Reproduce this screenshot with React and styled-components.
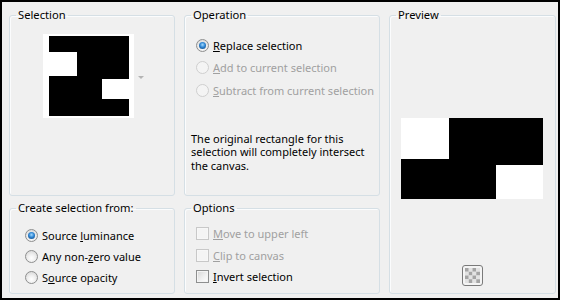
import React from "react";
import styled, { createGlobalStyle } from "styled-components";

const Global = createGlobalStyle`
  html, body {
    margin: 0;
    padding: 0;
    background: #ffffff;
  }
  body {
    font-family: "Noto Sans", "Open Sans", sans-serif;
    font-size: 11px;
    color: #000;
  }
`;

const Frame = styled.div`
  width: 560px;
  height: 300px;
  box-sizing: border-box;
  border: 2px solid #000;
  background: #f0f0f0;
  padding: 5px 0 0 7px;
  display: grid;
  grid-template-columns: 166px 196px 167px;
  grid-template-rows: 189px 94px;
  column-gap: 9px;
  row-gap: 4px;
`;

const Group = styled.fieldset`
  margin: 0;
  padding: 0;
  min-width: 0;
  box-sizing: border-box;
  border: 1px solid #d5dfe5;
  border-radius: 3px;
  box-shadow: inset 1px 1px 0 #fbfcfd;
  display: flex;
  flex-direction: column;
  grid-row: ${(p) => p.$row || "auto"};
  grid-column: ${(p) => p.$col || "auto"};
`;

const Legend = styled.legend`
  margin-left: 6px;
  padding: 0 2px;
  line-height: 16px;
  font-size: 11.2px;
  color: #000;
`;

const ThumbRow = styled.div`
  display: flex;
  justify-content: center;
  align-items: center;
  gap: 4px;
  margin-top: 11px;
  padding-left: 2px;
`;

const Thumb = styled.div`
  background: #fff;
  padding: 2px 5px 2px 6px;
  display: flex;
`;

const DropArrow = styled.span`
  width: 0;
  height: 0;
  border-left: 3px solid transparent;
  border-right: 3px solid transparent;
  border-top: 3px solid #b4b4b4;
  margin-top: 3px;
`;

const List = styled.div`
  display: flex;
  flex-direction: column;
  padding: ${(p) => p.$pad};
`;

const Row = styled.label`
  display: flex;
  align-items: center;
  gap: 4px;
  height: ${(p) => p.$h}px;
  color: ${(p) => (p.$disabled ? "#a0a0a0" : "#000")};
  white-space: nowrap;
`;

const Key = styled.span`
  text-decoration: underline;
  text-underline-offset: 1px;
`;

const Radio = styled.span`
  flex: none;
  width: 13px;
  height: 13px;
  box-sizing: border-box;
  border-radius: 50%;
  border: 1px solid ${(p) => (p.$disabled ? "#cfcfcf" : "#8e8f8f")};
  background: ${(p) =>
    p.$disabled
      ? "#f4f4f4"
      : "radial-gradient(circle at 50% 65%, #ffffff 0, #f0f0f0 40%, #d0d0d0 100%)"};
  display: flex;
  align-items: center;
  justify-content: center;
  &::after {
    content: "";
    display: ${(p) => (p.$checked ? "block" : "none")};
    width: 7px;
    height: 7px;
    border-radius: 50%;
    background: radial-gradient(
      circle at 50% 40%,
      #a6dcff 0,
      #2f86d4 45%,
      #0f3f73 100%
    );
  }
`;

const Check = styled.span`
  flex: none;
  width: 13px;
  height: 13px;
  box-sizing: border-box;
  border: 1px solid ${(p) => (p.$disabled ? "#c8c8c8" : "#8e8f8f")};
  background: ${(p) =>
    p.$disabled
      ? "#f4f4f4"
      : "linear-gradient(135deg, #d6d6d6 0%, #f2f2f2 60%, #fdfdfd 100%)"};
  box-shadow: inset 0 0 0 1px ${(p) => (p.$disabled ? "#f7f7f7" : "#f4f4f4")};
`;

const Note = styled.p`
  margin: 30px 0 0 6px;
  width: 178px;
  line-height: 13.5px;
`;

const PreviewBody = styled.div`
  display: flex;
  flex-direction: column;
  align-items: center;
  padding: 95px 0 0 0;
  gap: 66px;
`;

const PreviewImage = styled.div`
  display: flex;
  margin-left: -1px;
`;

const TransButton = styled.button`
  width: 21px;
  height: 21px;
  box-sizing: border-box;
  padding: 2px;
  border: 1px solid #7a7a7a;
  border-radius: 3px;
  background: #f4f4f4;
  display: flex;
  align-items: center;
  justify-content: center;
`;

const Pattern = ({ w, h, rects }) => (
  <svg width={w} height={h} viewBox={`0 0 ${w} ${h}`}>
    <rect width={w} height={h} fill="#000" />
    {rects.map((r, i) => (
      <rect key={i} x={r[0]} y={r[1]} width={r[2]} height={r[3]} fill="#fff" />
    ))}
  </svg>
);

const Checker = () => {
  const cells = [];
  for (let y = 0; y < 4; y++)
    for (let x = 0; x < 4; x++)
      cells.push(
        <rect
          key={`${x}-${y}`}
          x={x * 4}
          y={y * 4}
          width="4"
          height="4"
          fill={(x + y) % 2 ? "#e2e2e2" : "#a4a4a4"}
        />
      );
  return (
    <svg width="15" height="15" viewBox="0 0 16 16">
      {cells}
    </svg>
  );
};

export default function App() {
  return (
    <>
      <Global />
      <Frame>
        <Group $row="1" $col="1">
          <Legend>Selection</Legend>
          <ThumbRow>
            <Thumb>
              <Pattern
                w={80}
                h={80}
                rects={[
                  [0, 16, 28, 24],
                  [53, 43, 27, 20],
                ]}
              />
            </Thumb>
            <DropArrow />
          </ThumbRow>
        </Group>

        <Group $row="1" $col="2">
          <Legend>Operation</Legend>
          <List $pad="11px 0 0 11px">
            <Row $h={22.5}>
              <Radio $checked />
              <span>
                <Key>R</Key>eplace selection
              </span>
            </Row>
            <Row $h={22.5} $disabled>
              <Radio $disabled />
              <span>
                <Key>A</Key>dd to current selection
              </span>
            </Row>
            <Row $h={22.5} $disabled>
              <Radio $disabled />
              <span>
                <Key>S</Key>ubtract from current selection
              </span>
            </Row>
          </List>
          <Note>
            The original rectangle for this selection will completely
            intersect the canvas.
          </Note>
        </Group>

        <Group $row="1 / span 2" $col="3">
          <Legend>Preview</Legend>
          <PreviewBody>
            <PreviewImage>
              <Pattern
                w={142}
                h={81}
                rects={[
                  [0, 0, 48, 41],
                  [95, 47, 47, 34],
                ]}
              />
            </PreviewImage>
            <TransButton>
              <Checker />
            </TransButton>
          </PreviewBody>
        </Group>

        <Group $row="2" $col="1">
          <Legend>Create selection from:</Legend>
          <List $pad="8.5px 0 0 15px">
            <Row $h={21}>
              <Radio $checked />
              <span>
                Source <Key>l</Key>uminance
              </span>
            </Row>
            <Row $h={21}>
              <Radio />
              <span>
                Any non-<Key>z</Key>ero value
              </span>
            </Row>
            <Row $h={21}>
              <Radio />
              <span>
                S<Key>o</Key>urce opacity
              </span>
            </Row>
          </List>
        </Group>

        <Group $row="2" $col="2">
          <Legend>Options</Legend>
          <List $pad="7px 0 0 11px">
            <Row $h={21.5} $disabled>
              <Check $disabled />
              <span>
                <Key>M</Key>ove to upper left
              </span>
            </Row>
            <Row $h={21.5} $disabled>
              <Check $disabled />
              <span>
                <Key>C</Key>lip to canvas
              </span>
            </Row>
            <Row $h={21.5}>
              <Check />
              <span>
                <Key>I</Key>nvert selection
              </span>
            </Row>
          </List>
        </Group>
      </Frame>
    </>
  );
}
